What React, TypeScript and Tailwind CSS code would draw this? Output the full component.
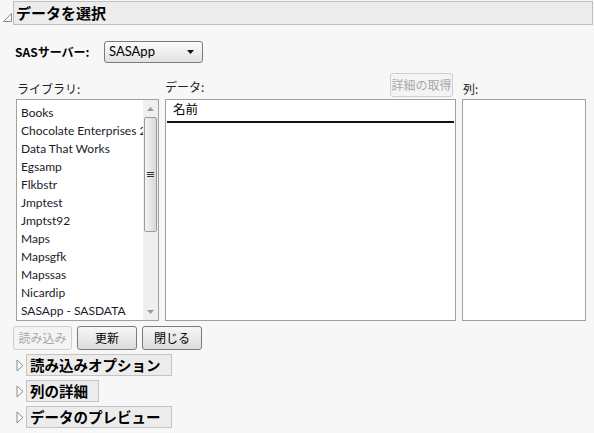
import React from 'react';

const jp = { fontFamily: '"Noto Sans CJK JP", "Noto Sans", sans-serif' };
const latin = { fontFamily: 'Lato, "Noto Sans", "Noto Sans CJK JP", sans-serif' };

const libraries = [
    'Books',
    'Chocolate Enterprises 2',
    'Data That Works',
    'Egsamp',
    'Flkbstr',
    'Jmptest',
    'Jmptst92',
    'Maps',
    'Mapsgfk',
    'Mapssas',
    'Nicardip',
    'SASApp - SASDATA',
];

function OpenTri() {
    return (
        <svg width="10" height="10" viewBox="0 0 10 10" className="shrink-0">
            <path d="M1.5 9.5 L9.5 9.5 L9.5 1.5 Z" fill="none" stroke="#8a8a8a" strokeWidth="1" />
        </svg>
    );
}

function ClosedTri() {
    return (
        <svg width="8" height="13" viewBox="0 0 8 13" className="shrink-0">
            <path d="M1 1 L7 6.5 L1 12 Z" fill="#fafafa" stroke="#8a8a8a" strokeWidth="1" />
        </svg>
    );
}

function Section({ title, width }: { title: string; width: string }) {
    return (
        <div className="flex items-center gap-[2px] pl-[16px]">
            <ClosedTri />
            <div className={`h-[22px] ${width} bg-[#ececec] border border-[#c4c4c4] flex items-center pl-[3px] text-[14.5px] font-bold text-black whitespace-nowrap`} style={jp}>
                {title}
            </div>
        </div>
    );
}

function Btn({ label, disabled }: { label: string; disabled?: boolean }) {
    return (
        <button
            className={
                disabled
                    ? 'h-[24px] w-[59px] rounded-[3px] border border-[#cfcfcf] bg-[#f4f4f4] text-[12px] text-[#a8a8a8]'
                    : 'h-[24px] w-[60px] rounded-[3px] border border-[#7a7a7a] bg-gradient-to-b from-[#f7f7f7] to-[#dcdcdc] text-[12px] text-black'
            }
            style={jp}
        >
            {label}
        </button>
    );
}

export default function App() {
    return (
        <div className="w-[594px] h-[433px] bg-[#f7f7f7] overflow-hidden relative">
            {/* Title */}
            <div className="flex items-end pt-px pl-[2px]">
                <div className="pb-[3px]"><OpenTri /></div>
                <div className="ml-px h-[24px] w-[580px] bg-[#ececec] border border-[#c0c0c0] flex items-center pl-[2px] text-[15px] font-bold text-black" style={jp}>
                    データを選択
                </div>
            </div>

            {/* SAS server */}
            <div className="flex items-center mt-[16px] pl-[15px] h-[22px]">
                <span className="text-[12px] font-bold text-black w-[89px]" style={jp}>SASサーバー:</span>
                <div className="h-[22px] w-[99px] rounded-[3px] border border-[#7a7a7a] bg-gradient-to-b from-[#fbfbfb] to-[#e2e2e2] flex items-center justify-between pl-[4px] pr-[8px]">
                    <span className="text-[13px] text-black" style={latin}>SASApp</span>
                    <svg width="7" height="4" viewBox="0 0 7 4"><path d="M0 0 L7 0 L3.5 4 Z" fill="#111" /></svg>
                </div>
            </div>

            {/* Labels */}
            <div className="grid grid-cols-[143px_291px_124px] gap-x-[6px] pl-[16px] mt-[10px] h-[26px]">
                <div className="flex items-end pb-[1px] pl-px text-[12px] text-[#222]" style={jp}>ライブラリ:</div>
                <div className="flex items-end justify-between pb-[2px]">
                    <span className="text-[12px] text-[#222] pb-px" style={jp}>データ:</span>
                    <button className="h-[24px] w-[63px] -mb-[1px] mr-[3px] self-start rounded-[3px] border border-[#cfcfcf] bg-[#f4f4f4] text-[12px] text-[#a8a8a8]" style={jp}>詳細の取得</button>
                </div>
                <div className="flex items-end pb-[1px] pl-px text-[12px] text-[#222]" style={jp}>列:</div>
            </div>

            {/* Lists */}
            <div className="grid grid-cols-[143px_291px_124px] gap-x-[6px] pl-[16px] h-[219px]">
                <div className="border border-[#a0a0a0] bg-white flex">
                    <div className="flex-1 pt-[4px] pl-[4px] overflow-hidden">
                        {libraries.map((l) => (
                            <div key={l} className="h-[18px] leading-[18px] text-[12px] text-[#1a1a2a] whitespace-nowrap" style={latin}>{l}</div>
                        ))}
                    </div>
                    <div className="w-[15px] bg-[#efefef] flex flex-col items-center">
                        <div className="h-[17px] flex items-center justify-center">
                            <svg width="7" height="4" viewBox="0 0 7 4"><path d="M0 4 L7 4 L3.5 0 Z" fill="#9a9a9a" /></svg>
                        </div>
                        <div className="w-[13px] h-[115px] rounded-[2px] border border-[#9a9a9a] bg-gradient-to-r from-[#f4f4f4] to-[#d9d9d9] flex items-center justify-center">
                            <div className="flex flex-col gap-[1px]">
                                <div className="w-[7px] h-px bg-[#333]" />
                                <div className="w-[7px] h-px bg-[#333]" />
                                <div className="w-[7px] h-px bg-[#333]" />
                            </div>
                        </div>
                        <div className="flex-1" />
                        <div className="h-[17px] flex items-center justify-center">
                            <svg width="7" height="4" viewBox="0 0 7 4"><path d="M0 0 L7 0 L3.5 4 Z" fill="#9a9a9a" /></svg>
                        </div>
                    </div>
                </div>
                <div className="border border-[#a0a0a0] bg-white">
                    <div className="mx-px h-[23px] border-b-2 border-[#111] flex items-end pb-[2px] pl-[6px] text-[12.5px] text-black" style={jp}>名前</div>
                </div>
                <div className="border border-[#a0a0a0] bg-white" />
            </div>

            {/* Buttons */}
            <div className="flex gap-[5px] pl-[13px] mt-[8px]">
                <Btn label="読み込み" disabled />
                <Btn label="更新" />
                <Btn label="閉じる" />
            </div>

            {/* Sections */}
            <div className="flex flex-col gap-[4px] mt-[4px]">
                <Section title="読み込みオプション" width="w-[146px]" />
                <Section title="列の詳細" width="w-[73px]" />
                <Section title="データのプレビュー" width="w-[146px]" />
            </div>
        </div>
    );
}
